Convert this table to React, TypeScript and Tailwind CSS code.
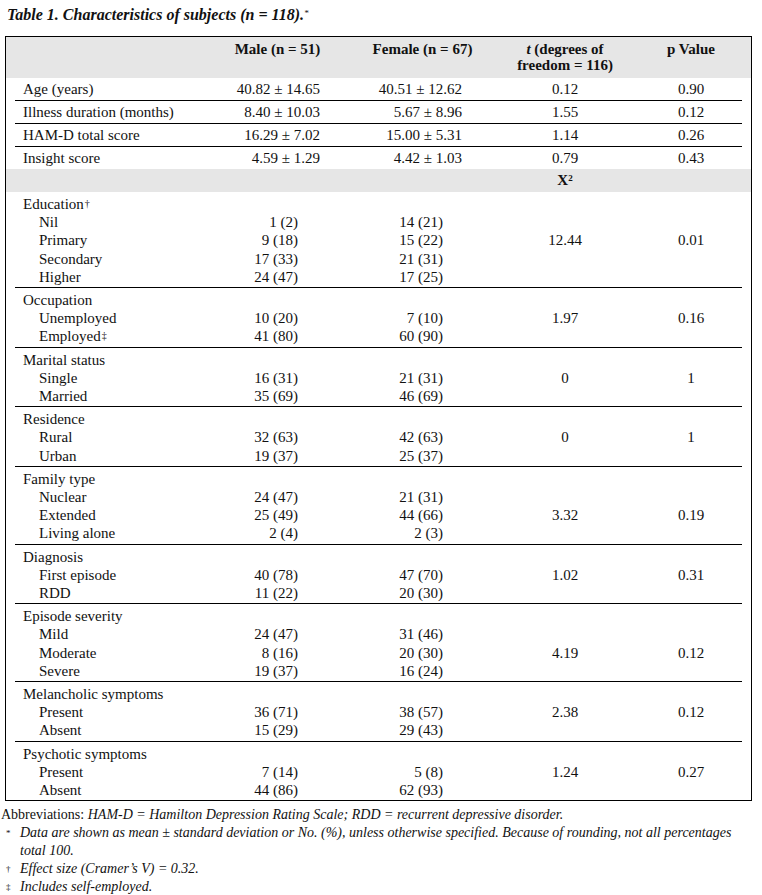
type Item = { name: string; sup?: string; male: string; female: string };
type Group = {
    label: string;
    sup?: string;
    items: Item[];
    statAt: number;
    t: string;
    p: string;
};

const continuous = [
    ["Age (years)", "40.82 ± 14.65", "40.51 ± 12.62", "0.12", "0.90"],
    ["Illness duration (months)", "8.40 ± 10.03", "5.67 ± 8.96", "1.55", "0.12"],
    ["HAM-D total score", "16.29 ± 7.02", "15.00 ± 5.31", "1.14", "0.26"],
    ["Insight score", "4.59 ± 1.29", "4.42 ± 1.03", "0.79", "0.43"],
];

const groups: Group[] = [
    {
        label: "Education",
        sup: "†",
        statAt: 2,
        t: "12.44",
        p: "0.01",
        items: [
            { name: "Nil", male: "1 (2)", female: "14 (21)" },
            { name: "Primary", male: "9 (18)", female: "15 (22)" },
            { name: "Secondary", male: "17 (33)", female: "21 (31)" },
            { name: "Higher", male: "24 (47)", female: "17 (25)" },
        ],
    },
    {
        label: "Occupation",
        statAt: 1,
        t: "1.97",
        p: "0.16",
        items: [
            { name: "Unemployed", male: "10 (20)", female: "7 (10)" },
            { name: "Employed", sup: "‡", male: "41 (80)", female: "60 (90)" },
        ],
    },
    {
        label: "Marital status",
        statAt: 1,
        t: "0",
        p: "1",
        items: [
            { name: "Single", male: "16 (31)", female: "21 (31)" },
            { name: "Married", male: "35 (69)", female: "46 (69)" },
        ],
    },
    {
        label: "Residence",
        statAt: 1,
        t: "0",
        p: "1",
        items: [
            { name: "Rural", male: "32 (63)", female: "42 (63)" },
            { name: "Urban", male: "19 (37)", female: "25 (37)" },
        ],
    },
    {
        label: "Family type",
        statAt: 2,
        t: "3.32",
        p: "0.19",
        items: [
            { name: "Nuclear", male: "24 (47)", female: "21 (31)" },
            { name: "Extended", male: "25 (49)", female: "44 (66)" },
            { name: "Living alone", male: "2 (4)", female: "2 (3)" },
        ],
    },
    {
        label: "Diagnosis",
        statAt: 1,
        t: "1.02",
        p: "0.31",
        items: [
            { name: "First episode", male: "40 (78)", female: "47 (70)" },
            { name: "RDD", male: "11 (22)", female: "20 (30)" },
        ],
    },
    {
        label: "Episode severity",
        statAt: 2,
        t: "4.19",
        p: "0.12",
        items: [
            { name: "Mild", male: "24 (47)", female: "31 (46)" },
            { name: "Moderate", male: "8 (16)", female: "20 (30)" },
            { name: "Severe", male: "19 (37)", female: "16 (24)" },
        ],
    },
    {
        label: "Melancholic symptoms",
        statAt: 1,
        t: "2.38",
        p: "0.12",
        items: [
            { name: "Present", male: "36 (71)", female: "38 (57)" },
            { name: "Absent", male: "15 (29)", female: "29 (43)" },
        ],
    },
    {
        label: "Psychotic symptoms",
        statAt: 1,
        t: "1.24",
        p: "0.27",
        items: [
            { name: "Present", male: "7 (14)", female: "5 (8)" },
            { name: "Absent", male: "44 (86)", female: "62 (93)" },
        ],
    },
];

const cols = "grid grid-cols-[185px_155px_135px_150px_102px]";

function Sup({ children }: { children: string }) {
    return <sup className="text-[10px] relative -top-[2px] ml-[1px]">{children}</sup>;
}

function GroupBlock({ group, last }: { group: Group; last: boolean }) {
    return (
        <div
            className={`pt-[3px] pb-[1px] leading-[18.2px] ${
                last ? "" : "border-b border-black"
            }`}
        >
            <div className={cols}>
                <div className="pl-[8px]">
                    {group.label}
                    {group.sup && <Sup>{group.sup}</Sup>}
                </div>
            </div>
            {group.items.map((item, i) => {
                const showStat = i + 1 === group.statAt;
                return (
                    <div key={item.name} className={cols}>
                        <div className="pl-[24px]">
                            {item.name}
                            {item.sup && <Sup>{item.sup}</Sup>}
                        </div>
                        <div className="text-right pr-[57px]">{item.male}</div>
                        <div className="text-right pr-[47px]">{item.female}</div>
                        <div className="text-center">{showStat ? group.t : ""}</div>
                        <div className="text-center">{showStat ? group.p : ""}</div>
                    </div>
                );
            })}
        </div>
    );
}

export default function App() {
    return (
        <div className="w-[762px] h-[895px] overflow-hidden bg-white text-[#111] font-['Liberation_Serif',serif] text-[15px]">
            {/* Title */}
            <div className="h-[36px] pl-[7px] pt-[5px] font-bold italic text-[16px] leading-[20px]">
                Table 1. Characteristics of subjects (n = 118).
                <sup className="text-[9px] font-normal">*</sup>
            </div>

            {/* Table */}
            <div className="ml-[5px] w-[747px] border border-black">
                <div className={`${cols} bg-[#e6e6e6] px-[9px] pt-[4px] pb-[5px] font-bold leading-[16px]`}>
                    <div />
                    <div className="text-center">Male (n = 51)</div>
                    <div className="text-center">Female (n = 67)</div>
                    <div className="text-center">
                        <span className="italic">t</span> (degrees of
                        <br />
                        freedom = 116)
                    </div>
                    <div className="text-center">p Value</div>
                </div>

                <div className="px-[9px]">
                    {continuous.map((row, i) => (
                        <div
                            key={row[0]}
                            className={`${cols} items-center leading-[18.25px] ${
                                i < continuous.length - 1
                                    ? "h-[23px] border-b border-black"
                                    : "h-[22px]"
                            }`}
                        >
                            <div className="pl-[8px]">{row[0]}</div>
                            <div className="text-right pr-[35px]">{row[1]}</div>
                            <div className="text-right pr-[28px]">{row[2]}</div>
                            <div className="text-center">{row[3]}</div>
                            <div className="text-center">{row[4]}</div>
                        </div>
                    ))}
                </div>

                <div className={`${cols} h-[23px] items-center bg-[#e6e6e6] px-[9px] font-bold`}>
                    <div />
                    <div />
                    <div />
                    <div className="text-center">
                        X<sup className="text-[9px]">2</sup>
                    </div>
                    <div />
                </div>

                <div className="px-[9px]">
                    {groups.map((g, i) => (
                        <GroupBlock key={g.label} group={g} last={i === groups.length - 1} />
                    ))}
                </div>
            </div>

            {/* Footnotes */}
            <div className="mt-[5px] text-[14px] leading-[18px]">
                <div className="pl-[1px]">
                    Abbreviations:{" "}
                    <span className="italic">
                        HAM-D = Hamilton Depression Rating Scale; RDD = recurrent depressive
                        disorder.
                    </span>
                </div>
                <div className="grid grid-cols-[20px_1fr] italic">
                    <div className="not-italic text-[9px] pl-[6px]">*</div>
                    <div>
                        Data are shown as mean ± standard deviation or No. (%), unless otherwise
                        specified. Because of rounding, not all percentages
                        <br />
                        total 100.
                    </div>
                    <div className="not-italic text-[9px] pl-[6px]">†</div>
                    <div>Effect size (Cramer’s V) = 0.32.</div>
                    <div className="not-italic text-[9px] pl-[6px]">‡</div>
                    <div>Includes self-employed.</div>
                </div>
            </div>
        </div>
    );
}
